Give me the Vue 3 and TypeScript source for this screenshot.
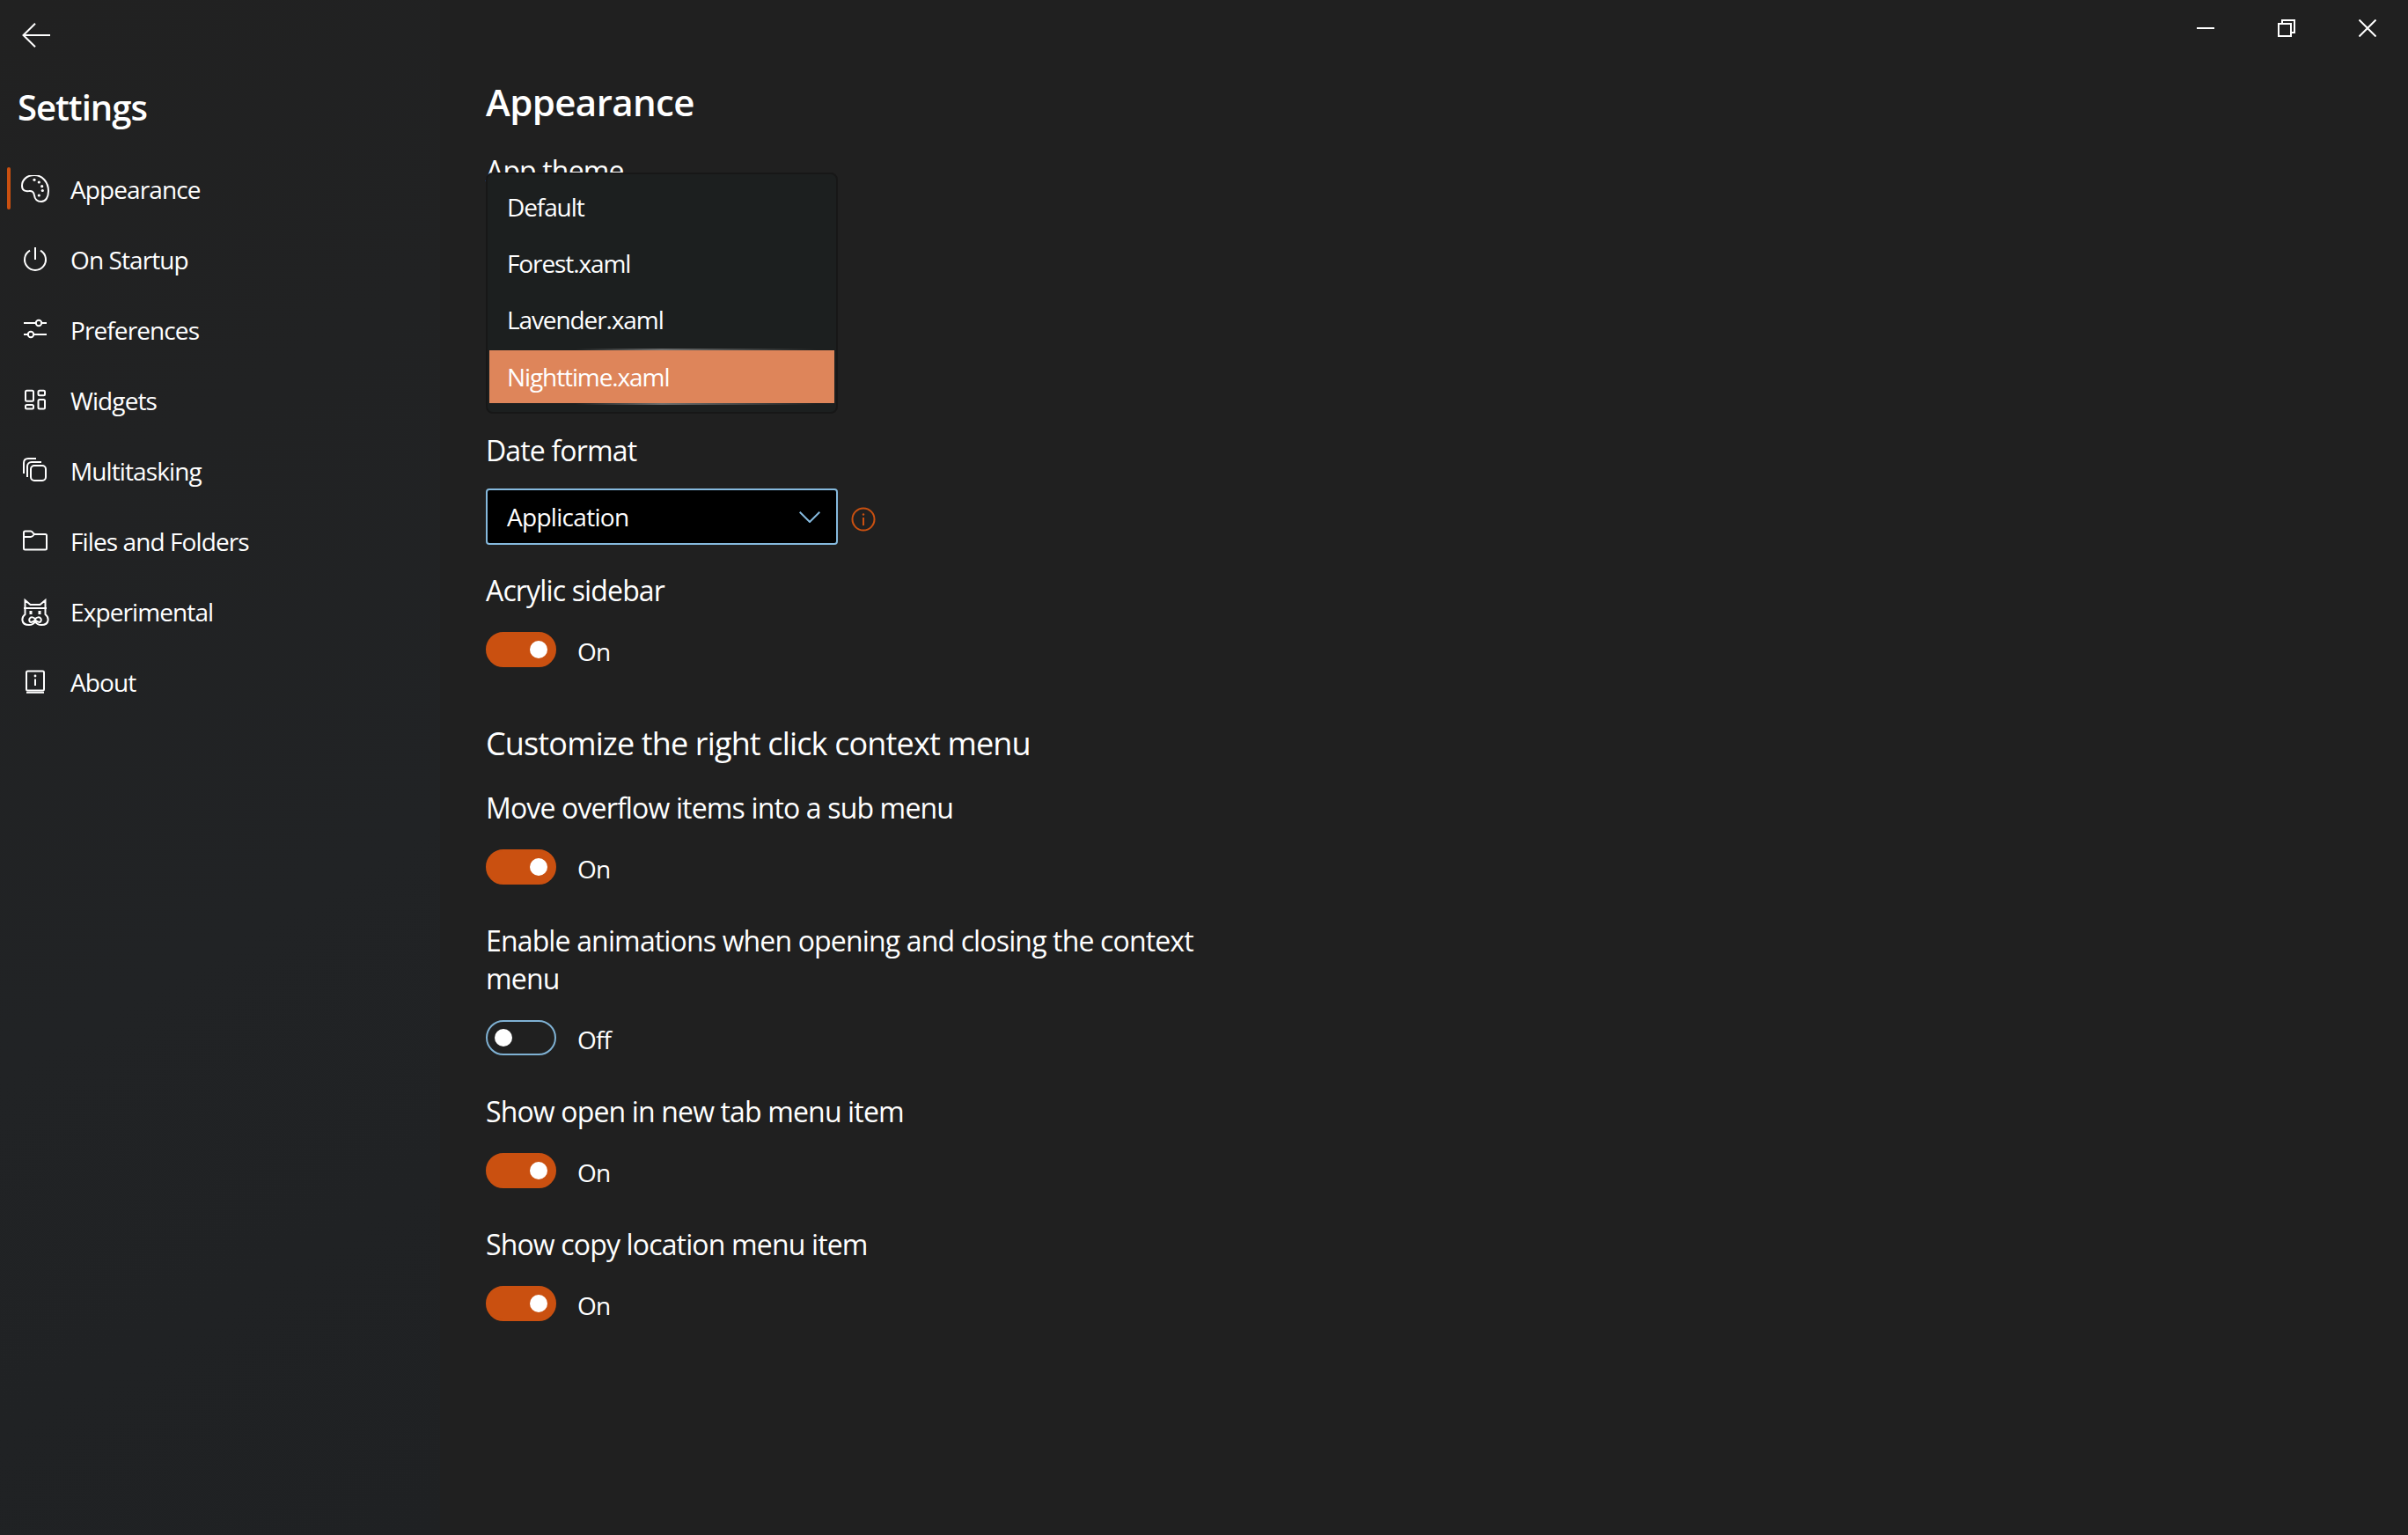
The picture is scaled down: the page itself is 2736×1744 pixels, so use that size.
<script setup lang="ts">
interface NavItem { label: string; icon: string; active?: boolean }
const nav: NavItem[] = [
  { label: 'Appearance', icon: 'palette', active: true },
  { label: 'On Startup', icon: 'power' },
  { label: 'Preferences', icon: 'sliders' },
  { label: 'Widgets', icon: 'widgets' },
  { label: 'Multitasking', icon: 'stack' },
  { label: 'Files and Folders', icon: 'folder' },
  { label: 'Experimental', icon: 'cat' },
  { label: 'About', icon: 'about' },
]
const themes = ['Default', 'Forest.xaml', 'Lavender.xaml', 'Nighttime.xaml']
const contextItems = [
  { label: 'Move overflow items into a sub menu', on: true },
  { label: 'Enable animations when opening and closing the context menu', on: false },
  { label: 'Show open in new tab menu item', on: true },
  { label: 'Show copy location menu item', on: true },
]
</script>

<template>
  <div class="app">
    <aside class="sidebar">
      <div class="back">
        <svg width="32" height="28" viewBox="0 0 32 28" fill="none" stroke="#fff" stroke-width="2">
          <path d="M1 14H32M15 0.7L1.500 14L15 27.300" />
        </svg>
      </div>
      <div class="side-title">Settings</div>
      <nav class="nav">
        <div v-for="item in nav" :key="item.label" class="nav-item">
          <span v-if="item.active" class="indicator"></span>
          <svg class="nav-icon" width="32" height="32" viewBox="0 0 32 32" fill="none" stroke="#fff" stroke-width="2">
            <g v-if="item.icon === 'palette'" transform="translate(0,-1)">
              <path d="M1 13C1 6 7 1 15 1C24 1 31 9 31 19C31 26 28 31 23 31C18 31 15.500 28 15 24C14.500 20 12 18.500 9 19C5 19.500 1 19 1 13Z" />
              <g fill="#fff" stroke="none">
                <circle cx="15" cy="6.300" r="1.600" /><circle cx="20.300" cy="9" r="1.600" /><circle cx="23.700" cy="13.700" r="1.600" />
                <circle cx="24.300" cy="18.500" r="1.600" /><circle cx="20.300" cy="24" r="1.600" />
              </g>
            </g>
            <template v-else-if="item.icon === 'power'">
              <path d="M10 5.600A12 12 0 1 0 22 5.600M16 2V16" />
            </template>
            <template v-else-if="item.icon === 'sliders'">
              <path d="M3 8H16.500M23.500 8H29M3 21H7.500M14.500 21H29" />
              <circle cx="20" cy="8" r="3.200" /><circle cx="11" cy="21" r="3.200" />
            </template>
            <template v-else-if="item.icon === 'widgets'">
              <rect x="5" y="4.700" width="9" height="12" rx="1.500" /><rect x="19.500" y="4.700" width="7.500" height="5.500" rx="1.500" />
              <rect x="5" y="21" width="9" height="4.500" rx="1.500" /><rect x="19.500" y="15" width="7.500" height="10.500" rx="1.500" />
            </template>
            <template v-else-if="item.icon === 'stack'">
              <rect x="11" y="10" width="17" height="17" rx="4" />
              <path d="M7 23V11C7 8.300 9 6 12 6H23M3 19V7C3 4 5 2 8 2H17" />
            </template>
            <template v-else-if="item.icon === 'folder'">
              <path d="M3 6C3 5 3.700 4.500 4.500 4.500H11C12 4.500 13 5.500 14 7C14.500 8 15 8 16 8H27.500C28.500 8 29 8.500 29 9.500V24C29 25 28.500 25.500 27.500 25.500H4.500C3.500 25.500 3 25 3 24ZM3 11H11C12.500 11 13.500 10 15 8" />
            </template>
            <template v-else-if="item.icon === 'cat'">
              <path d="M3 12H29M4.500 12V3L10.500 8H21.500L27.500 3V12M4.500 12V19C2 21 1 23 1.500 26C2 29.500 5.500 31 9 31C12 31 14.500 29.500 16 27.500C17.500 29.500 20 31 23 31C26.500 31 30 29.500 30.500 26C31 23 30 21 27.500 19V12" />
              <path d="M9.500 24C11 21.500 14.500 22 16 24.500C17.500 22 21 21.500 22.500 24C23.500 26 22 28.300 20 27.800C18.500 27.500 17 26.500 16 25.500C15 26.500 13.500 27.500 12 27.800C10 28.300 8.500 26 9.500 24Z" />
              <g fill="#fff" stroke="none"><rect x="9.500" y="15" width="3" height="4" /><rect x="19.500" y="15" width="3" height="4" /></g>
            </template>
            <template v-else>
              <rect x="6" y="3.500" width="20" height="22" rx="1.500" />
              <path d="M6 27.700H26M16 12.500V20" />
              <circle cx="16" cy="9" r="1.400" fill="#fff" stroke="none" />
            </template>
          </svg>
          <span class="nav-label">{{ item.label }}</span>
        </div>
      </nav>
    </aside>

    <main class="main">
      <div class="caption">
        <div class="cap-btn"><svg width="20" height="20" viewBox="0 0 20 20" stroke="#fff" stroke-width="2" fill="none"><path d="M0 10H20" /></svg></div>
        <div class="cap-btn"><svg width="20" height="20" viewBox="0 0 20 20" stroke="#fff" stroke-width="2" fill="none"><rect x="1" y="5" width="14" height="14" /><path d="M5 5V1H19V15H15" /></svg></div>
        <div class="cap-btn"><svg width="20" height="20" viewBox="0 0 20 20" stroke="#fff" stroke-width="2" fill="none"><path d="M0.500 0.500L19.500 19.500M19.500 0.500L0.500 19.500" /></svg></div>
      </div>
      <div class="content">
        <h1 class="title">Appearance</h1>

        <section class="theme">
          <div class="label">App theme</div>
          <div class="popup">
            <div v-for="t in themes" :key="t" class="popup-item" :class="{ selected: t === 'Nighttime.xaml' }">{{ t }}</div>
          </div>
        </section>

        <section class="date">
          <div class="label">Date format</div>
          <div class="combo-row">
            <div class="combo">
              <span>Application</span>
              <svg width="24" height="13" viewBox="0 0 24 13" fill="none" stroke="#85b9dd" stroke-width="2"><path d="M0.700 0.700L12 12L23.300 0.700" /></svg>
            </div>
            <svg class="info" width="28" height="28" viewBox="0 0 28 28" fill="none" stroke="#ca5010" stroke-width="2">
              <circle cx="14" cy="14" r="12.500" />
              <path d="M14 12V21" /><circle cx="14" cy="8.500" r="1.200" fill="#ca5010" stroke="none" />
            </svg>
          </div>
        </section>

        <section class="setting first">
          <div class="label">Acrylic sidebar</div>
          <div class="toggle-row">
            <span class="toggle on"><i></i></span>
            <span class="state">On</span>
          </div>
        </section>

        <h2 class="subtitle">Customize the right click context menu</h2>

        <section v-for="c in contextItems" :key="c.label" class="setting">
          <div class="label">{{ c.label }}</div>
          <div class="toggle-row">
            <span class="toggle" :class="{ on: c.on }"><i></i></span>
            <span class="state">{{ c.on ? 'On' : 'Off' }}</span>
          </div>
        </section>
      </div>
    </main>
  </div>
</template>

<style>
html, body { margin: 0; background: #202020; }
</style>

<style scoped>
.app {
  display: flex;
  width: 2736px;
  height: 1744px;
  overflow: hidden;
  background: #202020;
  color: #fff;
  font-family: "Open Sans", "Noto Sans", sans-serif;
}
.sidebar {
  width: 500px;
  flex: none;
  background: linear-gradient(150deg, #212121 0%, #212325 60%, #1f2123 100%);
}
.back { padding: 26px 0 0 25px; box-sizing: border-box; display: flex; height: 91px; }
.side-title {
  margin-left: 20px;
  font-size: 40px;
  font-weight: 600;
  line-height: 62px;
  letter-spacing: -1px;
}
.nav { margin-top: 22px; display: flex; flex-direction: column; }
.nav-item { position: relative; height: 80px; display: flex; align-items: center; padding-left: 24px; }
.indicator {
  position: absolute; left: 8px; top: 15px; width: 4px; height: 48px;
  background: #ca5010; border-radius: 2px;
}
.nav-icon { flex: none; }
.nav-label { margin-left: 24px; font-size: 28px; letter-spacing: -0.9px; line-height: 40px; }

.main { flex: 1; min-width: 0; display: flex; flex-direction: column; }
.caption { display: flex; justify-content: flex-end; height: 64px; flex: none; }
.cap-btn { width: 92px; height: 64px; display: flex; align-items: center; justify-content: center; }
.content { padding-left: 52px; width: 840px; }
.title { margin: 23px 0 0; font-size: 42px; font-weight: 600; letter-spacing: -0.6px; line-height: 58px; }
.label { font-size: 32px; line-height: 43px; letter-spacing: -0.85px; }
.theme { position: relative; height: 318px; margin-top: 27px; }
.popup {
  position: absolute; left: 0; top: 24px; width: 400px; height: 274px; box-sizing: border-box;
  background: #1c1f1f; border: 2px solid #171717; border-radius: 8px; padding: 5px 2px 0 2px;
  display: flex; flex-direction: column;
}
.popup-item { height: 64px; flex: none; display: flex; align-items: center; padding-left: 20px; font-size: 28px; letter-spacing: -1.1px; }
.popup-item.selected {
  position: relative; background: #de855a; height: 60px; margin-top: 3px;
}
.popup-item.selected::before, .popup-item.selected::after {
  content: ""; position: absolute; left: 0; right: 0; height: 2px;
  background: linear-gradient(90deg, rgba(255,255,255,0) 25%, rgba(255,255,255,0.35) 50%, rgba(255,255,255,0) 95%);
}
.popup-item.selected::before { top: -2px; }
.popup-item.selected::after { bottom: -2px; }
.combo-row { display: flex; align-items: center; margin-top: 22px; }
.combo {
  width: 400px; height: 64px; box-sizing: border-box; background: #000; border: 2px solid #85b9dd; border-radius: 4px;
  display: flex; align-items: center; justify-content: space-between; padding: 0 18px 0 22px;
  font-size: 28px; letter-spacing: -0.7px;
}
.info { margin-left: 15px; margin-top: 6px; }
.setting { margin-top: 42px; }
.setting.first { margin-top: 30px; }
.toggle-row { display: flex; align-items: center; margin-top: 26px; height: 40px; }
.toggle {
  width: 80px; height: 40px; box-sizing: border-box; border-radius: 20px; border: 2px solid #7fb1d3;
  display: flex; align-items: center; padding-left: 8px;
}
.toggle i { width: 20px; height: 20px; border-radius: 50%; background: #fff; display: block; }
.toggle.on { background: #ca5010; border-color: #ca5010; justify-content: flex-end; padding: 0 8px 0 0; }
.state { margin-left: 24px; font-size: 28px; letter-spacing: -0.9px; padding-top: 4px; }
.subtitle { margin: 62px 0 0; font-size: 36px; font-weight: 400; letter-spacing: -0.85px; line-height: 50px; }
.subtitle + .setting { margin-top: 26px; }
</style>
